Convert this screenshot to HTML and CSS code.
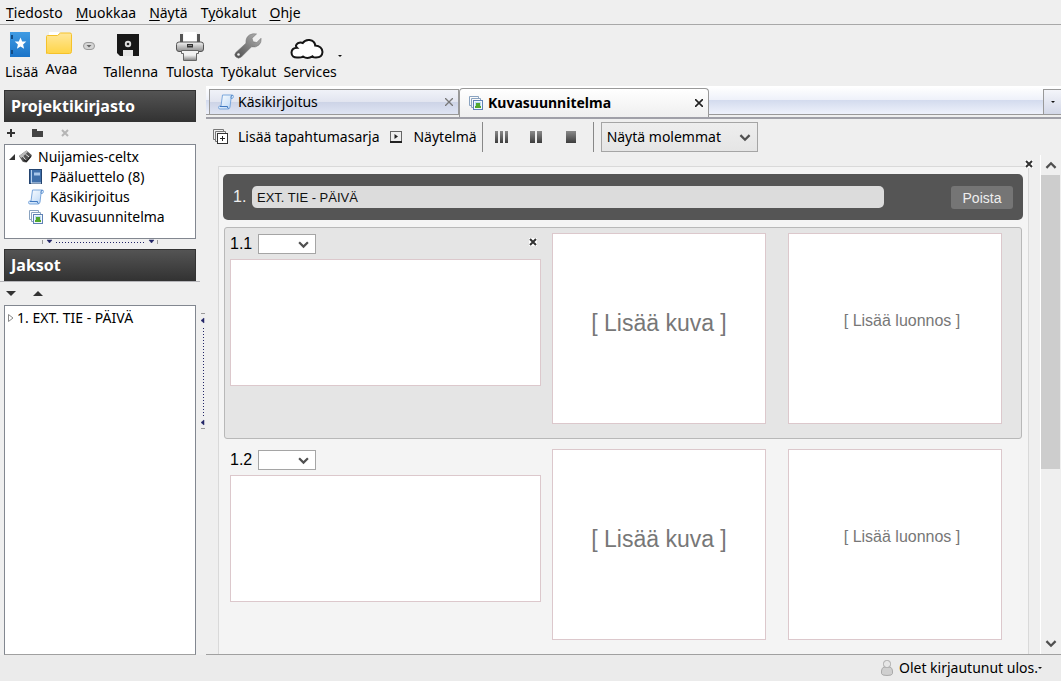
FILE: index.html
```html
<!DOCTYPE html>
<html lang="fi">
<head>
<meta charset="utf-8">
<title>Celtx</title>
<link rel="stylesheet" href="styles.css">
</head>
<body>
<svg class="defs" width="0" height="0" aria-hidden="true">
  <defs>
    <linearGradient id="gBlue" x1="0" y1="0" x2="0" y2="1"><stop offset="0" stop-color="#3f9be3"/><stop offset="1" stop-color="#1b74c8"/></linearGradient>
    <linearGradient id="gYellow" x1="0" y1="0" x2="0" y2="1"><stop offset="0" stop-color="#ffe79a"/><stop offset="1" stop-color="#ffd548"/></linearGradient>
    <linearGradient id="gGrey" x1="0" y1="0" x2="0" y2="1"><stop offset="0" stop-color="#f4f4f4"/><stop offset="1" stop-color="#8c8c8c"/></linearGradient>
    <linearGradient id="gMetal" x1="1" y1="0" x2="0" y2="1"><stop offset="0" stop-color="#b5b5b5"/><stop offset="1" stop-color="#4c4c4c"/></linearGradient>
    <linearGradient id="gBar" x1="0" y1="0" x2="0" y2="1"><stop offset="0" stop-color="#8a8a8a"/><stop offset="1" stop-color="#3c3c3c"/></linearGradient>
    <linearGradient id="gPaper" x1="0" y1="0" x2="1" y2="1"><stop offset="0" stop-color="#fff"/><stop offset="1" stop-color="#b5d4f5"/></linearGradient>
    <symbol id="scroll" viewBox="0 0 16 16"><path d="M4.500 1H14q1.500 0 1.500 1.500T14 4.500h-1L12 13q-.3 2-2 2H2Q.5 15 .5 13.500T2 12h1z" fill="url(#gPaper)" stroke="#7ba7dc"/><path d="M13 4.500V3q0-2 1.500-1.500M2 12.500h7.500q0 2 1 2" fill="none" stroke="#3f78c0"/></symbol>
    <symbol id="stack" viewBox="0 0 16 16"><path d="M3 10.500H1.500v-9h9V3M5 12.500H3.500v-9h9V5" fill="none" stroke="#8aa3c0"/><rect x="5.500" y="5.500" width="9" height="9" fill="#f3f7fd" stroke="#5f82b5"/><path d="M7 7h6v6H7z" fill="#b9dcf0"/><path d="M7 11h6v2H7zM8 8h4v3H8z" fill="#52a72c"/></symbol>
    <symbol id="cross" viewBox="0 0 8 8"><path d="M1 1l6 6M7 1L1 7" stroke="currentColor" stroke-width="2" fill="none"/></symbol>
    <symbol id="chev" viewBox="0 0 10 7"><path d="M1 1l4 4 4-4" stroke="#505050" stroke-width="2" fill="none"/></symbol>
  </defs>
</svg>

<nav class="menubar" aria-label="Valikko">
  <button><u>T</u>iedosto</button><button><u>M</u>uokkaa</button><button><u>N</u>äytä</button><button>T<u>y</u>ökalut</button><button><u>O</u>hje</button>
</nav>

<div class="toolbar">
  <button class="tool tool-add">
    <svg width="20" height="26" viewBox="3 0 20 26"><rect x="3" width="20" height="25" fill="url(#gBlue)"/><path d="M4 4h2M4 6h2M4 19h2M4 21h2" stroke="#124c84" stroke-width="2"/><path d="M13.500 5.500l1.700 4h4.100l-3.200 2.900 1 4.300-3.600-2.300-3.600 2.300 1-4.300-3.200-2.900h4.100z" fill="#fff"/></svg>
    <span>Lisää</span>
  </button>
  <button class="tool tool-open">
    <svg width="28" height="23" viewBox="0 0 28 23"><path d="M4 0h10v5H4z" fill="#fff"/><path d="M1.500 21.500v-17q0-1 1-1h10l3-2.500h9.500q1.500 0 1.500 1.500v17q0 2-2 2h-21q-2 0-2-2z" fill="url(#gYellow)" stroke="#f5c22a"/></svg>
    <span>Avaa</span>
  </button>
  <button class="tool-more" aria-label="Lisää vaihtoehtoja"><svg width="12" height="10" viewBox="0 0 12 10"><rect x=".5" y="1.500" width="11" height="7" rx="3.500" fill="#d5d5d5" stroke="#999"/><path d="M3.500 4h5L6 6.500z" fill="#666"/></svg></button>
  <button class="tool tool-save">
    <svg width="24" height="26" viewBox="0 0 24 26"><path d="M1 2h22v22H4l-3-3z" fill="#181818"/><circle cx="12" cy="12" r="3.200" fill="#ddd"/><circle cx="12" cy="12" r="1.300" fill="#222"/><path d="M7 18h10v6H7z" fill="#e6e6e6"/></svg>
    <span>Tallenna</span>
  </button>
  <button class="tool tool-print">
    <svg width="30" height="30" viewBox="0 0 30 30"><path d="M8.500 0h13v11h-13z" fill="#fff"/><path d="M6.500 2v9M23.500 2v9" stroke="#555" stroke-width="3"/><rect x="1.500" y="10" width="27" height="9.500" rx="2.500" fill="url(#gGrey)" stroke="#555"/><path d="M12 12h6v3.500h-6z" fill="#333"/><path d="M13.500 13h1v1h-1zM15.500 13h1v1h-1z" fill="#ddd"/><path d="M6.500 18.500h17v3h-2v7h-13v-7h-2z" fill="#f2f2f2" stroke="#666"/><path d="M9 23h12v5H9z" fill="url(#gGrey)"/></svg>
    <span>Tulosta</span>
  </button>
  <button class="tool tool-wrench">
    <svg width="28" height="26" viewBox="0 0 28 26"><path d="M1.800 19.500L12 10.200Q11.500 4.500 15.500 2 19 0 22.500 1L18 5.200l1 3.600 3.800.7L27 5.300q.8 4.200-2.300 6.900-3.200 2.500-7.200 1.600L7.300 24Q4.500 26.300 2 24-.4 22 1.800 19.500z" fill="url(#gMetal)" stroke="#777" stroke-width=".6"/><circle cx="4.500" cy="21.500" r="1.300" fill="#eee"/></svg>
    <span>Työkalut</span>
  </button>
  <button class="tool tool-cloud">
    <svg width="34" height="22" viewBox="0 0 34 22"><path d="M8 19.500Q1.500 20 1.500 14.500 1.800 10 7 9.800 4.500 7.500 8 5.200q2.500-1.300 4.800-.2Q15 1.500 19.500 2q5.500 1 5.700 5.500 6.800.5 7.300 6.500-.3 5.500-6.500 5.500-2.500 0-3.500-1.200Q17.500 21.500 13 18.500q-2 1.200-5 1z" fill="#fff" stroke="#151515" stroke-width="2"/></svg>
    <span>Services</span>
  </button>
  <span class="caret tool-caret"></span>
</div>

<div class="workspace">
  <aside class="sidebar">
    <h2 class="side-title">Projektikirjasto</h2>
    <div class="side-actions">
      <button aria-label="Lisää"><svg width="8" height="8" viewBox="0 0 8 8"><path d="M4 0v8M0 4h8" stroke="#333" stroke-width="2"/></svg></button>
      <button aria-label="Uusi kansio"><svg width="12" height="8" viewBox="0 0 12 8"><path d="M0 0h5v2h6v6H0z" fill="#444"/></svg></button>
      <button class="muted" aria-label="Poista"><svg width="8" height="8"><use href="#cross"/></svg></button>
    </div>
    <ul class="tree library">
      <li><svg width="8" height="8" viewBox="0 0 8 8"><path d="M7 1v6H1z" fill="#333"/></svg><svg width="13" height="14" viewBox="0 0 14 14"><path d="M0 6l8-6 6 5-7 8-3-1z" fill="#555"/><path d="M0 6l8-6 1.500 1.500L2.500 8z" fill="#bbb"/><path d="M4 6l3 4M7 4l4 3" stroke="#eee"/><path d="M5 10l3 2 5-6" fill="none" stroke="#222" stroke-width="1.500"/></svg><span>Nuijamies-celtx</span></li>
      <li class="child"><svg width="16" height="16" viewBox="0 0 16 16"><rect x="1.500" y=".5" width="12" height="14" fill="#3f6faa" stroke="#24446f"/><path d="M3.500 1v13" stroke="#b9d3ef"/><path d="M6 3.500h6v3H6z" fill="#a9c7ea"/><path d="M3 14h10" stroke="#dde9f6"/></svg><span>Pääluettelo (8)</span></li>
      <li class="child"><svg width="16" height="16"><use href="#scroll"/></svg><span>Käsikirjoitus</span></li>
      <li class="child"><svg width="16" height="16"><use href="#stack"/></svg><span>Kuvasuunnitelma</span></li>
    </ul>
    <div class="split-h"><svg width="116" height="6" viewBox="0 0 116 6"><path d="M.5 1v4M115.500 1v4" stroke="#999"/><path d="M5 1h5L7.500 4zM107 1h5l-2.500 3z" fill="#222566" stroke="#222566" stroke-width=".5"/><path d="M14 3.500h90" stroke="#222566" stroke-dasharray="1 2"/></svg></div>
    <h2 class="side-title">Jaksot</h2>
    <div class="side-arrows">
      <button aria-label="Alas"><svg width="10" height="6" viewBox="0 0 10 6"><path d="M0 0h10L5 5z" fill="#333"/></svg></button>
      <button aria-label="Ylös"><svg width="10" height="6" viewBox="0 0 10 6"><path d="M0 5h10L5 0z" fill="#333"/></svg></button>
    </div>
    <ul class="tree scenes">
      <li><svg width="6" height="10" viewBox="0 0 6 10"><path d="M.5 1.500v7L5 5z" fill="#fff" stroke="#888"/></svg><span>1. EXT. TIE - PÄIVÄ</span></li>
    </ul>
  </aside>
  <div class="split-v"><svg width="6" height="116" viewBox="0 0 6 116"><path d="M1 .5h4M1 115.500h4" stroke="#999"/><path d="M4 5v5L1 7.500zM4 107v5l-3-2.500z" fill="#222566" stroke="#222566" stroke-width=".5"/><path d="M3.500 15v90" stroke="#222566" stroke-dasharray="1 2"/></svg></div>

  <main class="editor">
    <div class="tabs">
      <div class="tab"><svg width="16" height="16"><use href="#scroll"/></svg><span>Käsikirjoitus</span><button aria-label="Sulje välilehti"><svg width="8" height="8" viewBox="0 0 8 8"><path d="M0 0l8 8M8 0L0 8" stroke="#777" stroke-width="1.300"/></svg></button></div>
      <div class="tab active"><svg width="16" height="16"><use href="#stack"/></svg><span>Kuvasuunnitelma</span><button aria-label="Sulje välilehti"><svg width="8" height="8" viewBox="0 0 8 8"><path d="M0 0l8 8M8 0L0 8" stroke="#222" stroke-width="1.600"/></svg></button></div>
      <button class="tab-list" aria-label="Kaikki välilehdet"><span class="caret"></span></button>
    </div>
    <div class="board-tools">
      <button class="seq"><svg width="16" height="16" viewBox="0 0 16 16"><path d="M2 10.500H.5V.5h10V2M4 12.500H2.500v-10h10V4" fill="none" stroke="#777"/><rect x="4.500" y="4.500" width="10" height="10" fill="#fff" stroke="#333"/><path d="M9.500 7v5M7 9.500h5" stroke="#222"/></svg><span>Lisää tapahtumasarja</span></button>
      <button class="play"><svg width="12" height="12" viewBox="0 0 12 12"><rect x=".5" y=".5" width="11" height="11" fill="#eee" stroke="#666"/><path d="M0 11h12" stroke="#222" stroke-width="2"/><path d="M4.500 3v5L8 5.500z" fill="#222"/></svg><span>Näytelmä</span></button>
      <span class="sep"></span>
      <button class="cols" aria-label="Kolme saraketta"><svg width="14" height="12" viewBox="0 0 14 12"><path d="M0 0h3v12H0zM5 0h3v12H5zM10 0h3v12h-3z" fill="url(#gBar)"/></svg></button>
      <button class="cols" aria-label="Kaksi saraketta"><svg width="14" height="12" viewBox="0 0 14 12"><path d="M0 0h5v12H0zM7 0h5v12H7z" fill="url(#gBar)"/></svg></button>
      <button class="cols" aria-label="Yksi sarake"><svg width="14" height="12" viewBox="0 0 14 12"><path d="M1 0h10v12H1z" fill="url(#gBar)"/></svg></button>
      <span class="sep"></span>
      <label class="select view"><select aria-label="Näkymä"><option>Näytä molemmat</option></select><svg width="12" height="8"><use href="#chev"/></svg></label>
    </div>
    <div class="board">
      <div class="board-view">
        <section class="sequence">
          <button class="close corner" aria-label="Sulje"><svg width="8" height="8"><use href="#cross"/></svg></button>
          <header class="seq-head"><label for="scene">1.</label><input id="scene" value="EXT. TIE - PÄIVÄ"><button>Poista</button></header>
          <article class="shot selected">
            <div class="shot-text">
              <div class="shot-head"><label for="s1">1.1</label><span class="select small"><select id="s1"><option></option></select><svg width="11" height="8"><use href="#chev"/></svg></span><button class="close" aria-label="Poista otos"><svg width="8" height="8"><use href="#cross"/></svg></button></div>
              <textarea aria-label="Otoksen 1.1 kuvaus"></textarea>
            </div>
            <button class="picture">[ Lisää kuva ]</button>
            <button class="picture draft">[ Lisää luonnos ]</button>
          </article>
          <article class="shot">
            <div class="shot-text">
              <div class="shot-head"><label for="s2">1.2</label><span class="select small"><select id="s2"><option></option></select><svg width="11" height="8"><use href="#chev"/></svg></span></div>
              <textarea aria-label="Otoksen 1.2 kuvaus"></textarea>
            </div>
            <button class="picture">[ Lisää kuva ]</button>
            <button class="picture draft">[ Lisää luonnos ]</button>
          </article>
        </section>
      </div>
      <div class="scrollbar">
        <button aria-label="Vieritä ylös"><svg class="up" width="12" height="8"><use href="#chev"/></svg></button>
        <div class="track"><div class="thumb"></div></div>
        <button aria-label="Vieritä alas"><svg width="12" height="8"><use href="#chev"/></svg></button>
      </div>
    </div>
  </main>
</div>

<footer class="status">
  <button><svg width="12" height="16" viewBox="0 0 12 16"><path d="M3 7Q.5 8 .5 11v2.500q0 2 5.500 2t5.500-2V11q0-3-2.500-4z" fill="#cfcfcf" stroke="#aaa"/><rect x="2.500" y=".5" width="7" height="7" rx="3" fill="#e6e6e6" stroke="#aaa"/></svg><span>Olet kirjautunut ulos.</span><span class="caret"></span></button>
</footer>
</body>
</html>
```
FILE: styles.css
```css
* { box-sizing: border-box; }
body {
  margin: 0;
  height: 100vh;
  display: flex;
  flex-direction: column;
  overflow: hidden;
  background: #efefef;
  color: #000;
  font: 14px/20px "Noto Sans", "Open Sans", sans-serif;
}
button, select, input, textarea { font: inherit; color: inherit; margin: 0; border: 0; padding: 0; background: none; }
svg { display: block; flex: none; }
.defs { position: absolute; }
.caret { border: 2px solid transparent; border-top-color: #111; border-bottom: 0; flex: none; }

.menubar {
  display: flex;
  gap: 13px;
  height: 25px;
  padding: 2px 6px 0;
  border-bottom: 1px solid #a8a8a8;
}
.menubar u { text-underline-offset: 2px; }

.toolbar { display: flex; align-items: flex-start; height: 61px; padding: 7px 5px 0; }
.tool { display: flex; flex-direction: column; align-items: center; }
.tool span { margin-top: 2px; }
.tool-add svg { height: 26px; margin: 0 4px 2px 0; }
.tool-open { margin-left: 7px; }
.tool-open svg { margin: 0 4px 2px 0; }
.tool-more { margin: 9px 0 0 6px; }
.tool-save { margin-left: 8px; }
.tool-save svg { margin: 0 6px 2px 0; }
.tool-print { margin-left: 8px; }
.tool-print svg { margin-bottom: -2px; }
.tool-wrench { margin-left: 7px; }
.tool-wrench svg { margin: 1px 0 1px 0; }
.tool-cloud { margin-left: 7px; }
.tool-cloud svg { margin: 6px 6px 0 0; }
.tool-caret { margin: 23px 0 0 1px; }

.workspace { flex: 1; min-height: 0; display: flex; }
.sidebar { width: 200px; flex: none; display: flex; flex-direction: column; padding: 4px 4px 0; }
.side-title {
  margin: 0;
  height: 32px;
  flex: none;
  padding: 0 6px;
  border: 1px solid #333;
  background: linear-gradient(#545454, #333);
  color: #fff;
  font-size: 16px;
  line-height: 30px;
}
.side-actions, .side-arrows { display: flex; align-items: center; flex: none; padding-left: 3px; height: 22px; gap: 17px; }
.side-arrows { height: 24px; margin: 0 -4px; padding-left: 6px; border-top: 1px solid #b5b5b9; }
.muted { color: #b5b5b5; }
.tree { list-style: none; margin: 0; padding: 2px 3px; background: #fff; border: 1px solid #828790; }
.tree li { display: flex; align-items: center; gap: 3px; height: 20px; white-space: nowrap; }
.tree li span { margin-left: 3px; }
.tree .child { padding-left: 20px; }
.library { height: 95px; flex: none; }
.scenes { flex: 1; min-height: 0; border-bottom-color: #a0a0a0; }
.scenes li { gap: 0; }
.split-h { height: 10px; flex: none; display: flex; justify-content: center; }
.split-v { width: 6px; flex: none; display: flex; align-items: center; }

.editor { flex: 1; min-width: 0; display: flex; flex-direction: column; }
.tabs {
  display: flex;
  flex: none;
  height: 33px;
  padding: 2px 0 2px 3px;
  border-top: 1px solid #fff;
  border-bottom: 2px solid #a0a0a8;
  background: linear-gradient(#fff 0, #eef1fa 13px, #d3dbee 13px, #eef1fb 27px, #999 27px, #999 28px, #efefef 28px);
}
.tab {
  display: flex;
  align-items: center;
  width: 250px;
  padding: 0 5px 0 8px;
  border: 1px solid #999;
  background: linear-gradient(#f0f2f8, #e2e5f0 48%, #ccd3e6 49%, #dfe4f3);
}
.tab span { flex: 1; margin-left: 4px; white-space: nowrap; }
.tab.active {
  margin: -1px 0 -2px;
  border-radius: 4px 4px 0 0;
  border-bottom: 0;
  background: linear-gradient(#fff, #efefef);
  font-weight: bold;
}
.tab-list { width: 18px; margin-left: auto; display: flex; align-items: center; justify-content: center; border: 1px solid #999; border-right: 0; background: linear-gradient(#f4f5fa, #d3d8e8); }

.board-tools { display: flex; align-items: center; flex: none; height: 36px; padding: 0 7px; white-space: nowrap; }
.board-tools button { display: flex; align-items: center; }
.seq span { margin-left: 9px; }
.play { margin-left: 11px; }
.play span { margin-left: 11px; }
.sep { width: 1px; height: 30px; margin: 0 12px 0 5px; background: #888; }
.cols { margin-right: 21px; }
.cols + .sep { margin: 0 7px 0 -7px; }
.select { position: relative; display: flex; background: #fff; border: 1px solid #a5a5a5; }
.select select { appearance: none; width: 100%; }
.select svg { position: absolute; right: 6px; top: 50%; margin-top: -3px; pointer-events: none; }
.view { width: 157px; height: 30px; background: linear-gradient(#eee, #e5e5e5); }
.view select { padding-left: 5px; }
.small { width: 58px; height: 20px; }

.board { flex: 1; min-height: 0; display: flex; border-bottom: 1px solid #a0a0a0; }
.board-view { flex: 1; min-width: 0; overflow: hidden; padding: 11px 11px 0 12px; }
.sequence { position: relative; min-height: 700px; padding: 7px 5px 0 4px; border: 1px solid #d9d9d9; background: #f4f4f4; }
.close { color: #333; background: #fff; }
.corner { position: absolute; top: -7px; right: -5px; }
.seq-head {
  display: flex;
  align-items: center;
  height: 46px;
  padding: 0 10px;
  border-radius: 5px;
  background: #555;
  color: #eee;
  font-family: "Liberation Sans", Arial, sans-serif;
  font-size: 14px;
}
.seq-head label { font-size: 16px; width: 19px; flex: none; }
.seq-head input { flex: 1; min-width: 0; height: 22px; padding: 1px 5px 0; border-radius: 5px; background: #dcdcdc; color: #111; font-size: 13px; }
.seq-head button { width: 62px; height: 23px; padding-top: 2px; margin-left: 67px; border-radius: 3px; background: #757575; }

.shot {
  display: grid;
  grid-template-columns: 311fr 214fr 214fr 19px;
  column-gap: 11px;
  height: 212px;
  margin: 7px 1px 0;
  padding: 5px 0 0 5px;
  border: 1px solid transparent;
  border-radius: 3px;
  font: 16px/20px "Liberation Sans", Arial, sans-serif;
}
.shot.selected { background: #e5e5e5; border-color: #b8b8b8; }
.shot + .shot { margin-top: 4px; }
.shot-head { display: flex; align-items: center; height: 22px; margin-bottom: 4px; }
.shot-head label { width: 28px; }
.shot-head .close { margin: 0 4px 4px auto; }
textarea { display: block; width: 100%; height: 127px; resize: none; background: #fff; border: 1px solid #dcc8cc; }
.picture { height: 191px; padding-bottom: 12px; background: #fff; border: 1px solid #dcc8cc; color: #777; font-size: 23px; white-space: nowrap; }
.picture.draft { font-size: 16px; margin: 0 -11px 0 11px; padding: 0 0 16px 14px; }

.scrollbar { width: 21px; flex: none; display: flex; flex-direction: column; border-left: 1px solid #fff; }
.scrollbar button { height: 20px; display: flex; align-items: center; justify-content: center; }
.up { transform: rotate(180deg); }
.track { flex: 1; min-height: 0; }
.thumb { height: 64%; margin-right: 1px; background: #cdcdcd; }

.status { display: flex; justify-content: flex-end; height: 26px; flex: none; padding: 0 19px 0 0; background: #ebebeb; }
.status button { display: flex; align-items: center; }
.status svg { margin-right: 6px; }
```
